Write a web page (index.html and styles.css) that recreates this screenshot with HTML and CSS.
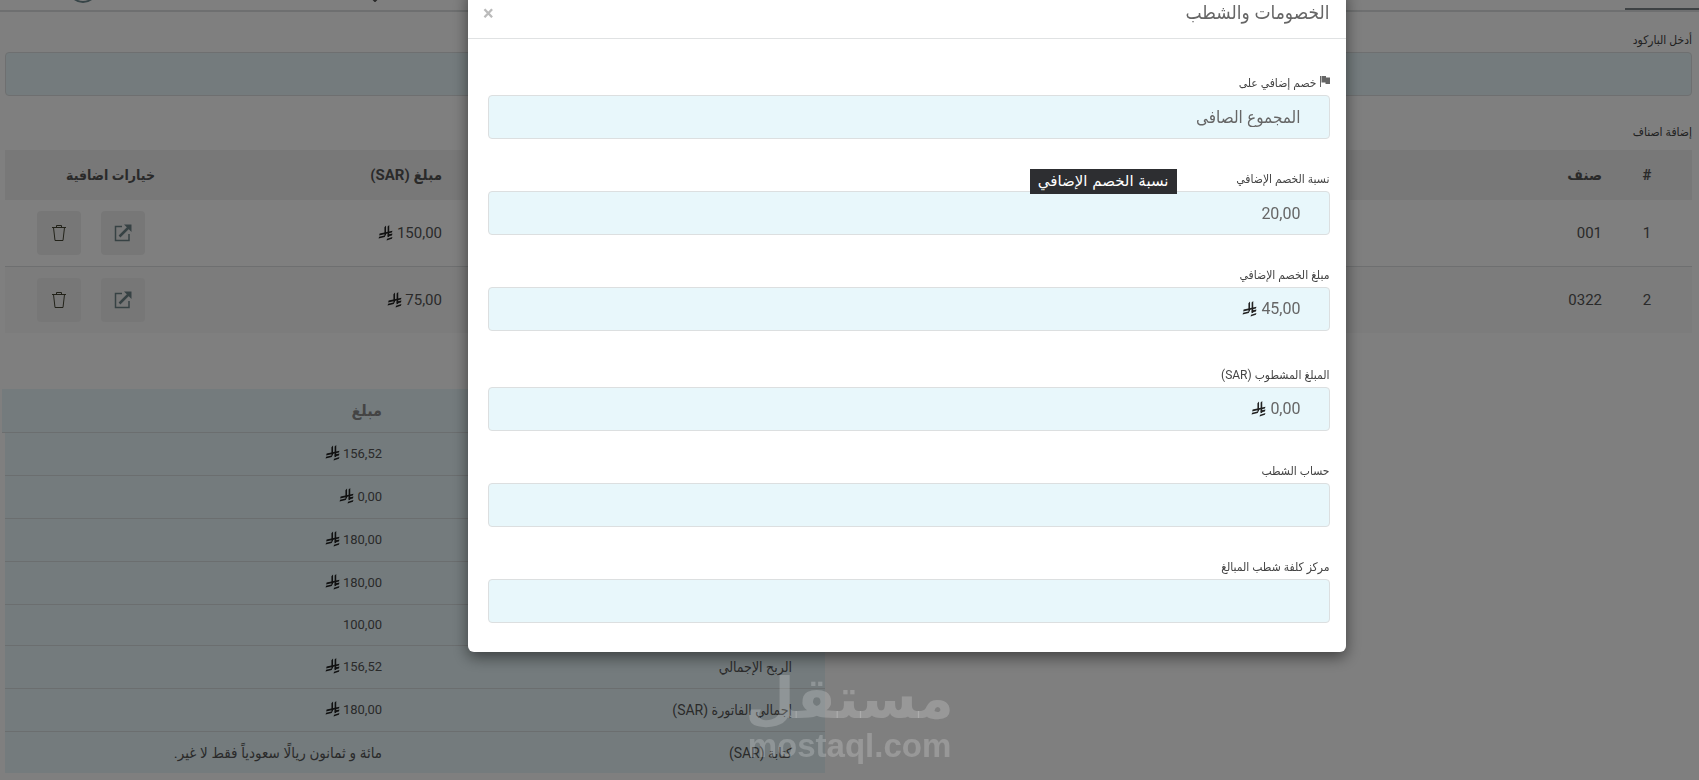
FILE: index.html
```
<!DOCTYPE html>
<html lang="ar" dir="rtl">
<head>
    <meta charset="UTF-8">
    <meta name="viewport" content="width=device-width, initial-scale=1.0">
    <title>الخصومات والشطب</title>
    <link rel="stylesheet" href="styles.css">
</head>
<body>

<!-- Shared icons -->
<svg class="icon-defs" width="0" height="0" aria-hidden="true">
    <symbol id="riyal" viewBox="0 0 28 30">
        <path d="M12 4 L15 1 V18 Q14 23 9 23.500 L1 25.500 L2 22 L12 19.500 Z"/>
        <path d="M18 3 L21 0 V22 L18 23 Z"/>
        <path d="M3 16 L27 11 L26 14 L2 19.500 Z"/>
        <path d="M18 18 L27 16 L26 19.500 L18 21.500 Z"/>
        <path d="M17 26 L27 22.500 L26 26 L16 29 Z"/>
    </symbol>
    <symbol id="open" viewBox="0 0 18 18">
        <path d="M8 2.500 H1.500 V16.500 H15 V10" fill="none" stroke="currentColor" stroke-width="1.500"/>
        <path d="M5.500 12.500 L14.500 3.500" stroke="currentColor" stroke-width="2.500"/>
        <path d="M10 0.500 H17.500 V8 Z"/>
    </symbol>
    <symbol id="trash" viewBox="0 0 14 18">
        <path d="M0 3.500 H14 M4.500 3.500 V1.500 H9.500 V3.500 M1.500 3.500 L3 16.500 H11 L12.500 3.500" fill="none" stroke="currentColor"/>
    </symbol>
</svg>

<header class="topbar">
    <svg class="topbar-logo" viewBox="0 0 30 30" aria-hidden="true"><circle cx="15" cy="15" r="14" fill="none" stroke="currentColor" stroke-width="2"/></svg>
    <svg class="topbar-arrow" viewBox="0 0 8 8" aria-hidden="true"><path d="M1 4 L4 7 L7 4" fill="none" stroke="currentColor" stroke-width="2"/></svg>
    <div class="topbar-tab"></div>
</header>

<main class="page">
    <label class="label" for="barcode">أدخل الباركود</label>
    <input class="control" type="text" id="barcode">

    <h2 class="label items-title">إضافة اصناف</h2>
    <table class="items">
        <thead>
            <tr>
                <th class="col-num">#</th>
                <th class="col-item">صنف</th>
                <th class="col-amount">مبلغ (SAR)</th>
                <th class="col-options">خيارات اضافية</th>
            </tr>
        </thead>
        <tbody>
            <tr>
                <td class="col-num">1</td>
                <td class="col-item">001</td>
                <td class="col-amount">150,00 <svg class="riyal"><use href="#riyal"/></svg></td>
                <td class="col-options">
                    <div class="options">
                        <button class="icon-button open" aria-label="فتح"><svg><use href="#open"/></svg></button>
                        <button class="icon-button trash" aria-label="حذف"><svg><use href="#trash"/></svg></button>
                    </div>
                </td>
            </tr>
            <tr>
                <td class="col-num">2</td>
                <td class="col-item">0322</td>
                <td class="col-amount">75,00 <svg class="riyal"><use href="#riyal"/></svg></td>
                <td class="col-options">
                    <div class="options">
                        <button class="icon-button open" aria-label="فتح"><svg><use href="#open"/></svg></button>
                        <button class="icon-button trash" aria-label="حذف"><svg><use href="#trash"/></svg></button>
                    </div>
                </td>
            </tr>
        </tbody>
    </table>

    <!-- Invoice totals -->
    <section class="summary">
        <div class="summary-head">
            <span></span>
            <span>مبلغ</span>
        </div>
        <div class="summary-row">
            <span></span>
            <span class="amount">156,52 <svg class="riyal"><use href="#riyal"/></svg></span>
        </div>
        <div class="summary-row">
            <span></span>
            <span class="amount">0,00 <svg class="riyal"><use href="#riyal"/></svg></span>
        </div>
        <div class="summary-row">
            <span></span>
            <span class="amount">180,00 <svg class="riyal"><use href="#riyal"/></svg></span>
        </div>
        <div class="summary-row">
            <span></span>
            <span class="amount">180,00 <svg class="riyal"><use href="#riyal"/></svg></span>
        </div>
        <div class="summary-row short">
            <span></span>
            <span class="amount">100,00</span>
        </div>
        <div class="summary-row">
            <span>الربح الإجمالي</span>
            <span class="amount">156,52 <svg class="riyal"><use href="#riyal"/></svg></span>
        </div>
        <div class="summary-row">
            <span>إجمالي الفاتورة (SAR)</span>
            <span class="amount">180,00 <svg class="riyal"><use href="#riyal"/></svg></span>
        </div>
        <div class="summary-row short">
            <span>كتابة (SAR)</span>
            <span class="in-words">مائة و ثمانون ريالًا سعودياً فقط لا غير.</span>
        </div>
    </section>
</main>

<!-- Discounts modal -->
<div class="overlay">
    <div class="modal" role="dialog" aria-labelledby="modalTitle">
        <div class="modal-header">
            <h1 class="modal-title" id="modalTitle">الخصومات والشطب</h1>
            <button class="modal-close" aria-label="إغلاق">×</button>
        </div>
        <form class="modal-body">
            <div class="field">
                <label class="label" for="discountOn"><svg class="flag" viewBox="0 0 10 11"><path d="M0 0 H1 V11 H0 Z M1.500 0 H6 V1.500 H10 V8 H5.500 V6.500 H1.500 Z"/></svg> خصم إضافي على</label>
                <select class="control" id="discountOn">
                    <option>المجموع الصافى</option>
                </select>
            </div>
            <div class="field">
                <label class="label" for="discountRate">نسبة الخصم الإضافي</label>
                <input class="control" type="text" id="discountRate" value="20,00">
                <div class="tooltip" role="tooltip">نسبة الخصم الإضافي</div>
            </div>
            <div class="field">
                <label class="label" for="discountAmount">مبلغ الخصم الإضافي</label>
                <div class="control money">
                    <input type="text" id="discountAmount" size="4" value="45,00">
                    <svg class="riyal"><use href="#riyal"/></svg>
                </div>
            </div>
            <div class="field field-group">
                <label class="label" for="writeOff">المبلغ المشطوب (SAR)</label>
                <div class="control money">
                    <input type="text" id="writeOff" size="4" value="0,00">
                    <svg class="riyal"><use href="#riyal"/></svg>
                </div>
            </div>
            <div class="field">
                <label class="label" for="writeOffAccount">حساب الشطب</label>
                <input class="control" type="text" id="writeOffAccount">
            </div>
            <div class="field">
                <label class="label" for="costCenter">مركز كلفة شطب المبالغ</label>
                <input class="control" type="text" id="costCenter">
            </div>
        </form>
    </div>
</div>

<div class="watermark">
    <span class="watermark-name">مستقل</span>
    <span class="watermark-url">mostaql.com</span>
</div>

</body>
</html>
```
FILE: styles.css
```
* {
    box-sizing: border-box;
}
body {
    margin: 0;
    height: 100vh;
    overflow: hidden;
    background-color: #fff;
    color: #555;
    font-family: Roboto, "DejaVu Sans Condensed", "DejaVu Sans", sans-serif;
    font-size: 15px;
    line-height: 20px;
}
svg {
    fill: currentColor;
}
.icon-defs {
    position: absolute;
}

/* Top bar */
.topbar {
    position: relative;
    height: 12px;
    border-bottom: 2px solid #dcdfe0;
}
.topbar-logo {
    position: absolute;
    left: 68px;
    bottom: 7px;
    width: 30px;
    color: #6f8a90;
}
.topbar-arrow {
    position: absolute;
    left: 371px;
    bottom: 8px;
    width: 8px;
}
.topbar-tab {
    width: 74px;
    height: 10px;
    border-bottom: 2px solid #7d8589;
}

/* Page */
.page {
    padding: 16px 7px 0 5px;
}
.label {
    display: block;
    margin: 0;
    height: 24px;
    color: #444;
    font-size: 12px;
    font-weight: normal;
    line-height: 24px;
    white-space: nowrap;
}
.control {
    display: block;
    width: 100%;
    height: 44px;
    padding: 0 28px;
    border: 1px solid #dcdfe0;
    border-radius: 4px;
    background-color: #e8f7fb;
    color: #666;
    font-family: inherit;
    font-size: 16px;
    outline: none;
    appearance: none;
}
select.control {
    font-size: 17px;
}
.items-title {
    margin-top: 24px;
    margin-bottom: 6px;
}
.riyal {
    width: 15px;
    height: 16px;
    vertical-align: -3px;
    color: #222;
}

/* Items table */
.items {
    width: 100%;
    table-layout: fixed;
    border-collapse: collapse;
}
.items th,
.items td {
    padding: 0;
    text-align: right;
}
.items th {
    height: 50px;
    background-color: #f0f0f0;
}
.items td {
    height: 66px;
}
.items tbody tr + tr td {
    height: 67px;
    border-top: 1px solid #dcdfe0;
    background-color: #f8f8f8;
}
.items .col-num {
    width: 90px;
    text-align: center;
}
.items .col-amount {
    width: 287px;
}
.items .col-options {
    width: 150px;
}
.items th.col-options {
    font-size: 14px;
}
.options {
    display: flex;
    gap: 20px;
    padding-right: 10px;
}
.icon-button {
    display: flex;
    align-items: center;
    justify-content: center;
    width: 44px;
    height: 44px;
    padding: 0;
    border: none;
    border-radius: 4px;
    background-color: #efefef;
    cursor: pointer;
}
.icon-button svg {
    width: 18px;
    height: 18px;
}
.icon-button.open {
    color: #6f8489;
}
.icon-button.trash {
    color: #443;
}
.icon-button.trash svg {
    width: 14px;
}

/* Totals */
.summary {
    width: 820px;
    margin-top: 56px;
    margin-right: auto;
    font-size: 14px;
}
.summary-head,
.summary-row {
    display: flex;
    align-items: center;
    height: 43px;
    padding-right: 33px;
    border-bottom: 1px solid #d7dcde;
    background-color: #e8f7fb;
}
.summary-head {
    height: 44px;
    margin-left: -3px;
    color: #888;
    font-size: 16px;
    font-weight: bold;
}
.summary-row.short {
    height: 41px;
}
.summary-row:last-child {
    border-bottom: none;
}
.summary-head span,
.summary-row span {
    flex: none;
    width: 410px;
}
.amount {
    font-size: 13px;
}
.in-words {
    font-size: 15px;
}

/* Modal */
.overlay {
    position: fixed;
    inset: 0;
    background-color: rgba(0, 0, 0, 0.5);
}
.modal {
    width: 878px;
    margin: -12px auto 0;
    transform: translateX(57px);
    border-radius: 6px;
    background-color: #fff;
    box-shadow: 0 5px 15px rgba(0, 0, 0, 0.5);
}
.modal-header {
    display: flex;
    align-items: center;
    justify-content: space-between;
    height: 51px;
    padding: 0 16px;
    border-bottom: 1px solid #e0e2e3;
}
.modal-title {
    margin: 0;
    color: #666;
    font-size: 19px;
    font-weight: normal;
}
.modal-close {
    width: 10px;
    padding: 0;
    border: none;
    background: none;
    color: #bbb;
    font-family: inherit;
    font-size: 20px;
    font-weight: bold;
    cursor: pointer;
}
.modal-body {
    display: flex;
    flex-direction: column;
    gap: 28px;
    padding: 32px 16px 29px 20px;
}
.field {
    position: relative;
}
.field-group {
    margin-top: 4px;
}
.flag {
    width: 10px;
    height: 11px;
    color: #666;
}
.money {
    display: flex;
    align-items: center;
    gap: 4px;
}
.money input {
    field-sizing: content;
    padding: 0;
    border: none;
    outline: none;
    background: none;
    color: inherit;
    font: inherit;
}
.tooltip {
    position: absolute;
    top: 2px;
    right: 153px;
    height: 25px;
    padding: 0 8px;
    background-color: #2d2e31;
    color: #fff;
    font-family: "DejaVu Sans", sans-serif;
    font-size: 15px;
    line-height: 24px;
    white-space: nowrap;
}

/* Watermark */
.watermark {
    position: fixed;
    bottom: 18px;
    left: 0;
    right: 0;
    display: flex;
    flex-direction: column;
    align-items: center;
    color: rgba(255, 255, 255, 0.2);
    font-weight: bold;
    pointer-events: none;
}
.watermark-name {
    font-family: "DejaVu Sans", sans-serif;
    font-size: 57px;
    line-height: 64px;
}
.watermark-url {
    font-family: "Liberation Sans", sans-serif;
    font-size: 33px;
    line-height: 32px;
}
```
